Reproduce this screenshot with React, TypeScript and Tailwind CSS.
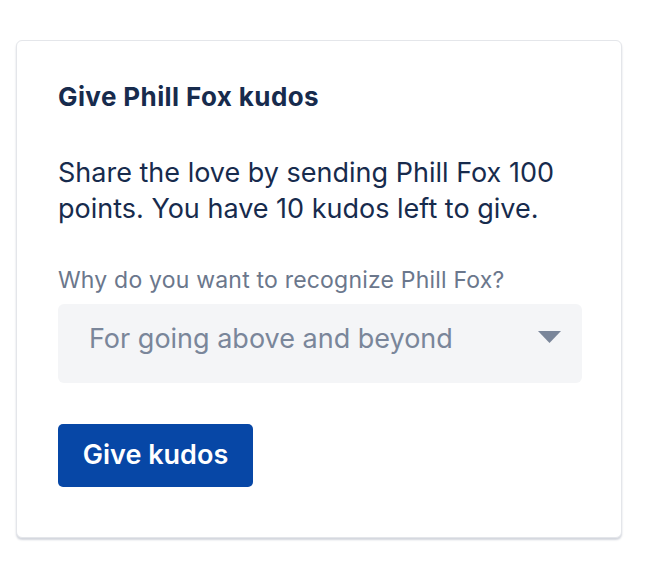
import type React from 'react'

const KudosCard: React.FC = () => {
  return (
    <div className="w-[606px] rounded-[6px] border border-[#e4e6ea] bg-white shadow-[0_2px_2px_rgba(9,30,66,0.18)] px-[41px] pt-[40px] pb-[50px]">
      <h2 className="text-[26px] leading-[32px] font-bold tracking-[0.4px] text-[#172b4d]">Give Phill Fox kudos</h2>

      <p className="mt-[42px] text-[27px] leading-[36px] text-[#172b4d] w-[510px]">
        Share the love by sending Phill Fox 100 points. You have 10 kudos left to give.
      </p>

      <label className="block mt-[39px] text-[23px] leading-[28px] tracking-[0.2px] text-[#6b778c]">
        Why do you want to recognize Phill Fox?
      </label>

      {/* 下拉框 */}
      <div className="mt-[10px] w-[524px] h-[79px] rounded-[6px] bg-[#f4f5f7] flex items-center justify-between pl-[31px] pr-[21px] pb-[8px]">
        <span className="text-[27px] text-[#7a869a]">For going above and beyond</span>
        <svg width="23" height="12" viewBox="0 0 23 12" className="mb-[5px]">
          <path d="M0 0 H23 L11.5 12 Z" fill="#7a869a" />
        </svg>
      </div>

      <button
        type="button"
        className="mt-[41px] w-[195px] h-[63px] rounded-[5px] bg-[#0747a6] text-white text-[27px] font-semibold"
      >
        Give kudos
      </button>
    </div>
  )
}

export default function App() {
  return (
    <div className="h-[564px] overflow-hidden bg-white pt-[40px] pl-[16px] font-['Inter',_'Liberation_Sans',_sans-serif]">
      <KudosCard />
    </div>
  )
}
